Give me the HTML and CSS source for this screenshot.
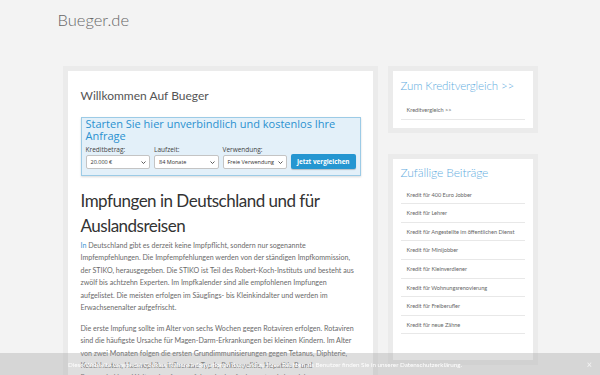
FILE: index.html
```html
<!DOCTYPE html>
<html lang="de">
<head>
    <meta charset="UTF-8">
    <meta name="viewport" content="width=device-width, initial-scale=1.0">
    <title>Bueger.de</title>
    <link rel="stylesheet" href="styles.css">
</head>
<body>
    <div class="page">
        <header class="site-header">
            <div class="site-title">Bueger.de</div>
        </header>

        <div class="layout">
            <main class="content-card">
                <h1 class="welcome">Willkommen Auf Bueger</h1>

                <div class="compare-box">
                    <div class="compare-title">Starten Sie hier unverbindlich und kostenlos Ihre Anfrage</div>
                    <div class="compare-form">
                        <div class="field">
                            <label>Kreditbetrag:</label>
                            <div class="select">20.000 €<svg viewBox="0 0 10 6"><path d="M1 1l4 4 4-4" /></svg></div>
                        </div>
                        <div class="field">
                            <label>Laufzeit:</label>
                            <div class="select">84 Monate<svg viewBox="0 0 10 6"><path d="M1 1l4 4 4-4" /></svg></div>
                        </div>
                        <div class="field">
                            <label>Verwendung:</label>
                            <div class="select">Freie Verwendung<svg viewBox="0 0 10 6"><path d="M1 1l4 4 4-4" /></svg></div>
                        </div>
                        <button class="compare-btn">Jetzt vergleichen</button>
                    </div>
                </div>

                <h2 class="article-title">Impfungen in Deutschland und für Auslandsreisen</h2>
                <p><a href="#">In</a> Deutschland gibt es derzeit keine Impfpflicht, sondern nur sogenannte Impfempfehlungen. Die Impfempfehlungen werden von der ständigen Impfkommission, der STIKO, herausgegeben. Die STIKO ist Teil des Robert-Koch-Instituts und besteht aus zwölf bis achtzehn Experten. Im Impfkalender sind alle empfohlenen Impfungen aufgelistet. Die meisten erfolgen im Säuglings- bis Kleinkindalter und werden im Erwachsenenalter aufgefrischt.</p>
                <p>Die erste Impfung sollte im Alter von sechs Wochen gegen Rotaviren erfolgen. Rotaviren sind die häufigste Ursache für Magen-Darm-Erkrankungen bei kleinen Kindern. Im Alter von zwei Monaten folgen die ersten Grundimmunisierungen gegen Tetanus, Diphterie, Keuchhusten, Haemophilus influenzae Typ b, Poliomyelitis, Hepatitis B und Pneumokokken. Weitere Impfungen folgen im Laufe der ersten Lebensjahre.</p>
            </main>

            <aside class="sidebar">
                <section class="widget">
                    <h3 class="widget-title">Zum Kreditvergleich &gt;&gt;</h3>
                    <ul class="widget-list">
                        <li><a href="#">Kreditvergleich &gt;&gt;</a></li>
                    </ul>
                </section>

                <section class="widget widget-random">
                    <h3 class="widget-title">Zufällige Beiträge</h3>
                    <ul class="widget-list">
                        <li><a href="#">Kredit für 400 Euro Jobber</a></li>
                        <li><a href="#">Kredit für Lehrer</a></li>
                        <li><a href="#">Kredit für Angestellte im öffentlichen Dienst</a></li>
                        <li><a href="#">Kredit für Minijobber</a></li>
                        <li><a href="#">Kredit für Kleinverdiener</a></li>
                        <li><a href="#">Kredit für Wohnungsrenovierung</a></li>
                        <li><a href="#">Kredit für Freiberufler</a></li>
                        <li><a href="#">Kredit für neue Zähne</a></li>
                    </ul>
                </section>
            </aside>
        </div>
    </div>

    <div class="cookie-bar">
        <span>Diese Webseite verwendet Cookies. Nähere Informationen dazu und zu Ihren Rechten als Benutzer finden Sie in unserer Datenschutzerklärung.</span>
        <span class="cookie-close">×</span>
    </div>
</body>
</html>
```

FILE: styles.css
```css
body {
    margin: 0;
    background: #f3f3f3;
    font-family: Lato, "Open Sans", sans-serif;
    color: #555;
}

.page {
    width: 475px;
    margin: 0 auto;
}

.site-header {
    padding-top: 8px;
    margin-left: -5px;
}

.site-title {
    font-size: 16.5px;
    line-height: 24px;
    font-weight: 300;
    color: #666;
}

.layout {
    display: grid;
    grid-template-columns: 315px 150px;
    gap: 10px;
    align-items: start;
    margin-top: 34px;
}

.content-card {
    background: #fff;
    border: 5px solid #ebebeb;
    padding: 17px 12px 20px 13px;
}

.welcome {
    margin: 0 0 13px;
    font-size: 12px;
    line-height: 16px;
    font-weight: 400;
    color: #555;
}

/* vergleich box */
.compare-box {
    background: #e3f0f9;
    border: 1px solid #9ccbe6;
    box-shadow: 0 1px 2px rgba(0, 0, 0, 0.15);
    padding: 0 4px 6px;
}

.compare-title {
    font-family: "Open Sans", sans-serif;
    font-size: 11px;
    line-height: 11.5px;
    color: #2a91d0;
}

.compare-form {
    display: flex;
    align-items: flex-end;
    gap: 4px;
    margin-top: 5px;
}

.field {
    width: 65px;
}

.field label {
    display: block;
    font-family: "Open Sans", sans-serif;
    font-size: 6.5px;
    line-height: 8px;
    color: #444;
    margin-bottom: 1px;
}

.select {
    display: flex;
    align-items: center;
    justify-content: space-between;
    height: 14px;
    box-sizing: border-box;
    padding: 0 3px 0 4px;
    background: #fff;
    border: 1px solid #c4c4c4;
    border-radius: 2px;
    font-family: "Open Sans", sans-serif;
    font-size: 5.5px;
    color: #333;
}

.select svg {
    width: 5px;
    height: 3px;
    fill: none;
    stroke: #333;
    stroke-width: 1.6;
}

.compare-btn {
    width: 65px;
    height: 15px;
    padding: 0;
    border: none;
    border-radius: 2px;
    background: #2596d1;
    color: #fff;
    font-family: "Open Sans", sans-serif;
    font-size: 6.3px;
    font-weight: 700;
    box-shadow: 0 1px 1px rgba(0, 0, 0, 0.2);
}

.article-title {
    margin: 12px 0 2px;
    font-size: 17px;
    line-height: 25px;
    font-weight: 400;
    letter-spacing: -0.5px;
    color: #333;
}

.content-card p {
    margin: 0 0 8.4px;
    font-size: 7.1px;
    line-height: 12.4px;
    color: #6a6a6a;
}

.content-card p a {
    color: #3a95d2;
    text-decoration: none;
}

/* sidebar */
.widget {
    background: #fff;
    border: 5px solid #ebebeb;
    padding: 7px 8px 8px;
}

.widget-random {
    margin-top: 21px;
    padding-top: 5px;
    padding-bottom: 26px;
}

.widget-title {
    margin: 0 0 7px;
    font-size: 11.5px;
    line-height: 16px;
    font-weight: 300;
    letter-spacing: -0.1px;
    color: #63ade0;
}

.widget-random .widget-title {
    font-size: 12px;
    line-height: 18px;
    margin-bottom: 4px;
}

.widget-list {
    list-style: none;
    margin: 0;
    padding: 0;
}

.widget-list li {
    padding: 5px 0 4.6px 6px;
    border-bottom: 1px solid #e8e8e8;
    font-size: 5.6px;
    line-height: 8px;
}

.widget-list a {
    color: #666;
    text-decoration: none;
}

/* cookie hinweis */
.cookie-bar {
    position: fixed;
    left: 0;
    right: 0;
    bottom: 0;
    height: 22px;
    display: flex;
    align-items: center;
    justify-content: space-between;
    padding: 0 8px 0 68px;
    background: rgba(160, 160, 160, 0.35);
    color: #fff;
    font-size: 6.3px;
}

.cookie-close {
    font-size: 9px;
    color: #f4f4f4;
}
```
